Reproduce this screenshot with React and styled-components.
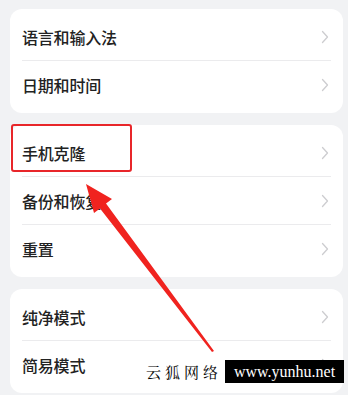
import React from "react";
import styled, { createGlobalStyle } from "styled-components";

const GlobalStyle = createGlobalStyle`
  html, body {
    margin: 0;
    padding: 0;
    background: #f1f2f4;
  }
  body {
    font-family: "Noto Sans CJK SC", "Noto Sans", sans-serif;
  }
`;

const groups = [
  ["语言和输入法", "日期和时间"],
  ["手机克隆", "备份和恢复", "重置"],
  ["纯净模式", "简易模式"],
];

const Chevron = () => (
  <svg width="8" height="14" viewBox="0 0 8 14" fill="none">
    <path d="M1.5 1.5 L6.5 7 L1.5 12.5" stroke="#cdcdd0" strokeWidth="1.3" strokeLinecap="round" strokeLinejoin="round" />
  </svg>
);

const App = () => {
  return (
    <Page>
      <GlobalStyle />
      {groups.map((group, gi) => (
        <Card key={gi}>
          {group.map((label, i) => (
            <Row key={label} $last={i === group.length - 1}>
              <Label>{label}</Label>
              <Chevron />
            </Row>
          ))}
        </Card>
      ))}

      <Highlight />
      <Arrow width="348" height="395" viewBox="0 0 348 395">
        <polygon
          points="86,184 112,199 106,203.5 214,351 212,352 100,208.5 94,213"
          fill="#f0231f"
        />
      </Arrow>

      <Watermark>
        <WatermarkCn>云狐网络</WatermarkCn>
        <WatermarkUrl>www.yunhu.net</WatermarkUrl>
      </Watermark>
    </Page>
  );
};

export default App;

const Page = styled.div`
  position: relative;
  width: 348px;
  height: 395px;
  overflow: hidden;
  box-sizing: border-box;
  padding: 9px 5px 0 10px;
  display: flex;
  flex-direction: column;
  gap: 12px;
`;

const Card = styled.div`
  background: #ffffff;
  border-radius: 12px;
  padding: 4px 0;
  display: flex;
  flex-direction: column;
  flex-shrink: 0;
`;

const Row = styled.div`
  height: 48px;
  margin: 0 12px;
  display: flex;
  align-items: center;
  justify-content: space-between;
  padding-right: 2px;
  border-bottom: ${(p) => (p.$last ? "none" : "1px solid #ebebed")};
  box-sizing: border-box;
`;

const Label = styled.span`
  font-size: 16px;
  font-weight: 500;
  color: #222222;
  letter-spacing: -0.2px;
`;

const Highlight = styled.div`
  position: absolute;
  left: 11px;
  top: 124px;
  width: 121px;
  height: 48px;
  box-sizing: border-box;
  border: 2.5px solid #e8262a;
  border-radius: 3px;
`;

const Arrow = styled.svg`
  position: absolute;
  left: 0;
  top: 0;
  pointer-events: none;
`;

const Watermark = styled.div`
  position: absolute;
  left: 146px;
  top: 360px;
  width: 200px;
  display: flex;
  align-items: center;
  gap: 3px;
  white-space: nowrap;
`;

const WatermarkCn = styled.span`
  font-family: "Noto Serif CJK SC", "Liberation Serif", serif;
  font-size: 15px;
  line-height: 23px;
  letter-spacing: 4px;
  color: #000000;
  font-weight: 400;
`;

const WatermarkUrl = styled.span`
  background: #000000;
  color: #ffffff;
  font-family: "Liberation Serif", serif;
  font-size: 16px;
  height: 23px;
  width: 119px;
  flex-shrink: 0;
  display: flex;
  align-items: center;
  justify-content: center;
  box-sizing: border-box;
`;
